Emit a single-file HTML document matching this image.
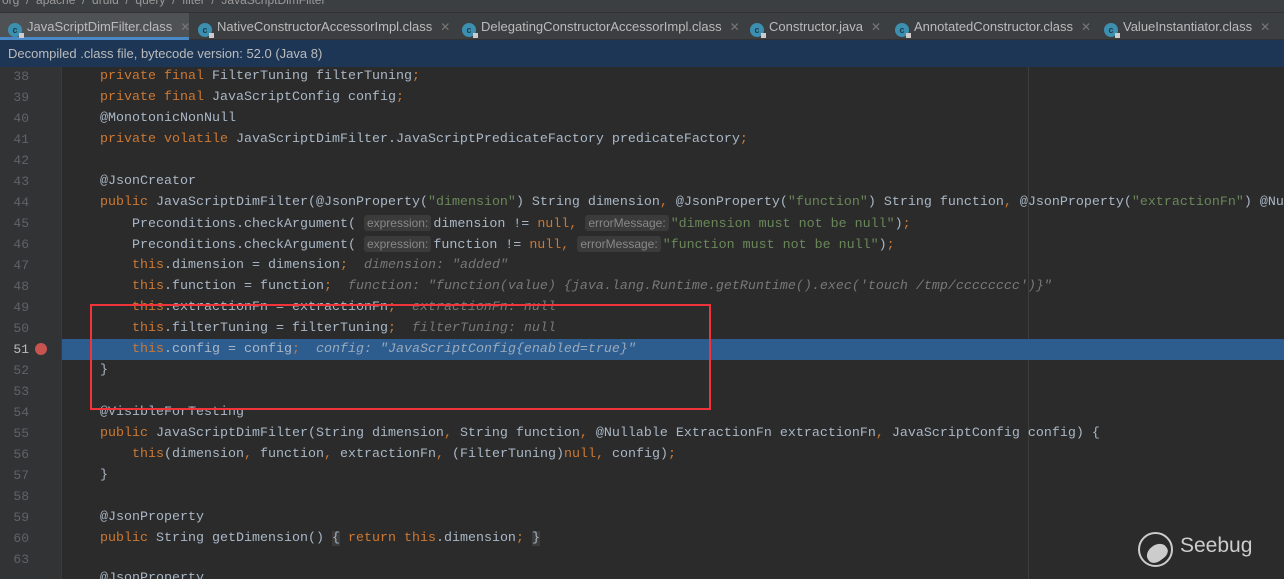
<!DOCTYPE html>
<html style="overflow:hidden;width:1284px;height:579px"><head><meta charset="utf-8"><style>
*{margin:0;padding:0;box-sizing:border-box}
body{width:1284px;height:579px;overflow:hidden;background:#2b2b2b;font-family:"Liberation Sans",sans-serif;position:relative}
#crumb{position:absolute;left:0;top:0;width:1284px;height:12px;background:#3c3f41;color:#999;font-size:12px;overflow:hidden}
#crumb span{position:absolute;top:-7px;white-space:pre}
#tabs{position:absolute;left:0;top:12px;width:1284px;height:28px;background:#3c3f41;border-top:1px solid #323232;border-bottom:1px solid #323232}
.tab{position:absolute;top:0;height:27px;color:#bbb;font-size:13px;line-height:27px;white-space:nowrap}
.ic{display:inline-block;width:14px;height:14px;border-radius:50%;background:#3d8fb0;vertical-align:-2px;margin-right:5px;position:relative;color:#1b3a4a;font-size:9px;line-height:14px;text-align:center;font-weight:bold}
.ic:after{content:"";position:absolute;right:-2px;bottom:-1px;width:5px;height:5px;background:#ccc}
.x{color:#777;margin-left:8px;font-size:12px}
#info{position:absolute;left:0;top:40px;width:1284px;height:27px;background:#1d3655;color:#bbb;font-size:13px;line-height:27px;padding-left:8px}
#gut{position:absolute;left:0;top:67px;width:62px;height:512px;background:#313335;border-right:1px solid #3a3a3a}
.ln{position:absolute;left:0;width:29px;text-align:right;color:#606366;font:13px/21px "Liberation Mono",monospace}
.code{position:absolute;left:100px;height:21px;font:13.33px/21px "Liberation Mono",monospace;color:#a9b7c6;white-space:pre}
.k{color:#cc7832}.s{color:#6a8759}.h{color:#787878;font-style:italic}
.p{font-family:"Liberation Sans",sans-serif;font-size:12px;color:#888;background:#3b3b3b;border-radius:3px;padding:1px 3px;margin-right:2px}
#hl{position:absolute;left:62px;top:339px;width:1222px;height:21px;background:#2d5c8f}
#box{position:absolute;left:90px;top:304px;width:621px;height:106px;border:2px solid #f0343a}
#margin{position:absolute;left:1028px;top:67px;width:1px;height:512px;background:#3d3d3d}
</style></head><body>
<div id="crumb"><span style="left:2px">org  /  apache  /  druid  /  query  /  filter  /  JavaScriptDimFilter</span></div>
<div id="tabs">
<div class="tab" style="left:0;width:189px;background:#4e5254;padding-left:8px;border-bottom:3px solid #4a88c7"><span class="ic">c</span>JavaScriptDimFilter.class<span class="x">✕</span></div>
<div class="tab" style="left:198px"><span class="ic">c</span>NativeConstructorAccessorImpl.class<span class="x">✕</span></div>
<div class="tab" style="left:462px"><span class="ic">c</span>DelegatingConstructorAccessorImpl.class<span class="x">✕</span></div>
<div class="tab" style="left:750px"><span class="ic">c</span>Constructor.java<span class="x">✕</span></div>
<div class="tab" style="left:895px"><span class="ic">c</span>AnnotatedConstructor.class<span class="x">✕</span></div>
<div class="tab" style="left:1104px"><span class="ic">c</span>ValueInstantiator.class<span class="x">✕</span></div>
</div>
<div id="info">Decompiled .class file, bytecode version: 52.0 (Java 8)</div>
<div id="gut"></div>
<div id="margin"></div>
<div id="hl"></div>
<div class="ln" style="top:66px">38</div><div class="ln" style="top:87px">39</div><div class="ln" style="top:108px">40</div><div class="ln" style="top:129px">41</div><div class="ln" style="top:150px">42</div><div class="ln" style="top:171px">43</div><div class="ln" style="top:192px">44</div><div class="ln" style="top:213px">45</div><div class="ln" style="top:234px">46</div><div class="ln" style="top:255px">47</div><div class="ln" style="top:276px">48</div><div class="ln" style="top:297px">49</div><div class="ln" style="top:318px">50</div><div class="ln" style="top:339px;color:#bbb">51</div><div class="ln" style="top:360px">52</div><div class="ln" style="top:381px">53</div><div class="ln" style="top:402px">54</div><div class="ln" style="top:423px">55</div><div class="ln" style="top:444px">56</div><div class="ln" style="top:465px">57</div><div class="ln" style="top:486px">58</div><div class="ln" style="top:507px">59</div><div class="ln" style="top:528px">60</div><div class="ln" style="top:549px">63</div>
<div style="position:absolute;left:35px;top:343px;width:12px;height:12px;border-radius:50%;background:#c75450"></div>
<div class="code" style="top:66px"><span class="k">private final </span>FilterTuning filterTuning<span class="k">;</span></div>
<div class="code" style="top:87px"><span class="k">private final </span>JavaScriptConfig config<span class="k">;</span></div>
<div class="code" style="top:108px">@MonotonicNonNull</div>
<div class="code" style="top:129px"><span class="k">private volatile </span>JavaScriptDimFilter.JavaScriptPredicateFactory predicateFactory<span class="k">;</span></div>
<div class="code" style="top:171px">@JsonCreator</div>
<div class="code" style="top:192px"><span class="k">public </span>JavaScriptDimFilter(@JsonProperty(<span class="s">"dimension"</span>) String dimension<span class="k">, </span>@JsonProperty(<span class="s">"function"</span>) String function<span class="k">, </span>@JsonProperty(<span class="s">"extractionFn"</span>) @Nullable</div>
<div class="code" style="top:213px">    Preconditions.checkArgument( <span class="p">expression:</span>dimension != <span class="k">null, </span><span class="p">errorMessage:</span><span class="s">"dimension must not be null"</span>)<span class="k">;</span></div>
<div class="code" style="top:234px">    Preconditions.checkArgument( <span class="p">expression:</span>function != <span class="k">null, </span><span class="p">errorMessage:</span><span class="s">"function must not be null"</span>)<span class="k">;</span></div>
<div class="code" style="top:255px">    <span class="k">this</span>.dimension = dimension<span class="k">;</span>  <span class="h">dimension: "added"</span></div>
<div class="code" style="top:276px">    <span class="k">this</span>.function = function<span class="k">;</span>  <span class="h">function: "function(value) {java.lang.Runtime.getRuntime().exec('touch /tmp/cccccccc')}"</span></div>
<div class="code" style="top:297px">    <span class="k">this</span>.extractionFn = extractionFn<span class="k">;</span>  <span class="h">extractionFn: null</span></div>
<div class="code" style="top:318px">    <span class="k">this</span>.filterTuning = filterTuning<span class="k">;</span>  <span class="h">filterTuning: null</span></div>
<div class="code" style="top:339px">    <span class="k">this</span>.config = config<span class="k">;</span>  <span class="h" style="color:#9ab">config: "JavaScriptConfig{enabled=true}"</span></div>
<div class="code" style="top:360px">}</div>
<div class="code" style="top:402px">@VisibleForTesting</div>
<div class="code" style="top:423px"><span class="k">public </span>JavaScriptDimFilter(String dimension<span class="k">, </span>String function<span class="k">, </span>@Nullable ExtractionFn extractionFn<span class="k">, </span>JavaScriptConfig config) {</div>
<div class="code" style="top:444px">    <span class="k">this</span>(dimension<span class="k">, </span>function<span class="k">, </span>extractionFn<span class="k">, </span>(FilterTuning)<span class="k">null, </span>config)<span class="k">;</span></div>
<div class="code" style="top:465px">}</div>
<div class="code" style="top:507px">@JsonProperty</div>
<div class="code" style="top:528px"><span class="k">public </span>String getDimension() <span style="background:#3b3b3b">{</span> <span class="k">return this</span>.dimension<span class="k">;</span> <span style="background:#3b3b3b">}</span></div>
<div class="code" style="top:568px;height:11px;overflow:hidden">@JsonProperty</div>
<div id="box"></div>
<div style="position:absolute;left:1138px;top:532px;width:35px;height:35px;border:2px solid #ccc;border-radius:50%"></div>
<div style="position:absolute;left:1146px;top:545px;width:22px;height:16px;background:#ccc;border-radius:50% 50% 40% 40%;transform:rotate(-35deg)"></div>
<div style="position:absolute;left:1180px;top:534px;color:#ccc;font-size:21px;font-family:'Liberation Sans',sans-serif">Seebug</div>
</body></html>
